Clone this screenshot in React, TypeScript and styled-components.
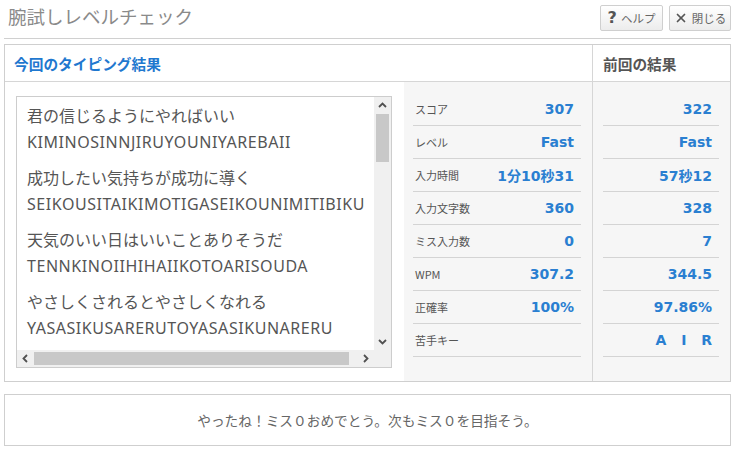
import React from 'react';
import styled, { createGlobalStyle } from 'styled-components';
import { X } from 'lucide-react';

const GlobalStyle = createGlobalStyle`
  body {
    margin: 0;
    background: #fff;
    font-family: 'Noto Sans', 'Noto Sans CJK JP', sans-serif;
    color: #555;
  }
`;

const Page = styled.div`
  padding: 0 7px 0 4px;
`;

const TitleBar = styled.div`
  display: flex;
  justify-content: space-between;
  align-items: flex-start;
  height: 38px;
  border-bottom: 1px solid #d0d0d0;
`;

const Title = styled.h1`
  margin: 0;
  padding: 4px 0 0 4px;
  font-size: 18.5px;
  font-weight: normal;
  color: #8a8a8a;
  line-height: 26px;
`;

const Buttons = styled.div`
  display: flex;
  gap: 6px;
  padding-top: 5px;
`;

const ToolButton = styled.button<{ $w: number }>`
  display: flex;
  align-items: center;
  justify-content: center;
  gap: 4px;
  width: ${(p) => p.$w}px;
  height: 26px;
  padding: 0;
  border: 1px solid #cfcfcf;
  border-radius: 2px;
  background: linear-gradient(#ffffff, #ececec);
  font-family: 'Noto Sans CJK JP', sans-serif;
  font-size: 11.5px;
  color: #666;
`;

const QuestionMark = styled.span`
  font-family: 'DejaVu Sans', sans-serif;
  font-weight: bold;
  font-size: 16px;
  color: #555;
  line-height: 1;
`;

const MainBox = styled.div`
  margin-top: 5px;
  border: 1px solid #cfcfcf;
  display: grid;
  grid-template-columns: 587px 1fr;
  grid-template-rows: 37px auto;
`;

const HeaderCell = styled.div<{ $right?: boolean }>`
  display: flex;
  align-items: center;
  padding-left: ${(p) => (p.$right ? 10 : 9)}px;
  border-bottom: 1px solid #d6d6d6;
  border-left: ${(p) => (p.$right ? '1px solid #d6d6d6' : 'none')};
  font-size: 14.7px;
  font-weight: bold;
  color: ${(p) => (p.$right ? '#555' : '#1f78cf')};
  font-family: 'Noto Sans CJK JP', sans-serif;
`;

const BodyLeft = styled.div`
  display: flex;
`;

const ListArea = styled.div`
  width: 399px;
  padding: 14px 11px 13px 11px;
  box-sizing: border-box;
`;

const ScrollBox = styled.div`
  width: 376px;
  height: 272px;
  box-sizing: border-box;
  border: 1px solid #cdcdcd;
  display: grid;
  grid-template-columns: 1fr 17px;
  grid-template-rows: 1fr 17px;
`;

const ScrollContent = styled.div`
  overflow: hidden;
  padding: 6px 10px;
  white-space: nowrap;
`;

const Sentence = styled.div`
  margin-bottom: 10px;
  font-size: 16px;
  line-height: 26px;
  color: #555;
`;

const Roman = styled.div`
  letter-spacing: 0.55px;
`;

const VBar = styled.div`
  display: flex;
  flex-direction: column;
  background: #f0f0f0;
`;

const HBar = styled.div`
  display: flex;
  background: #f0f0f0;
`;

const Corner = styled.div`
  background: #f0f0f0;
`;

const Arrow = styled.div`
  flex: 0 0 17px;
  height: 17px;
  display: flex;
  align-items: center;
  justify-content: center;
`;

const Track = styled.div<{ $vertical?: boolean }>`
  flex: 1;
  display: flex;
  flex-direction: ${(p) => (p.$vertical ? 'column' : 'row')};
`;

const Thumb = styled.div<{ $vertical?: boolean; $size: number }>`
  background: #c8c8c8;
  ${(p) =>
    p.$vertical
      ? `height: ${p.$size}px; margin: 0 2px;`
      : `width: ${p.$size}px; margin: 2px 0;`}
`;

const StatsArea = styled.div<{ $right?: boolean }>`
  flex: 1;
  background: #f6f6f6;
  padding: ${(p) => (p.$right ? '11px 11px 22px 10px' : '11px 11px 22px 9px')};
  border-left: ${(p) => (p.$right ? '1px solid #d6d6d6' : 'none')};
`;

const StatRow = styled.div`
  display: flex;
  align-items: center;
  justify-content: space-between;
  height: 32px;
  padding: 0 7px 0 2px;
  border-bottom: 1px solid #d4d4d4;
`;

const StatLabel = styled.span`
  font-family: 'Noto Sans CJK JP', sans-serif;
  font-size: 11px;
  color: #555;
`;

const StatValue = styled.span<{ $spaced?: boolean }>`
  font-family: 'DejaVu Sans', 'Noto Sans CJK JP', sans-serif;
  font-weight: bold;
  font-size: 14px;
  color: #2a7fd1;
  margin-left: auto;
  letter-spacing: ${(p) => (p.$spaced ? '5px' : 'normal')};
  margin-right: ${(p) => (p.$spaced ? '-5px' : '0')};
`;

const Footer = styled.div`
  margin-top: 12px;
  height: 50px;
  border: 1px solid #cfcfcf;
  display: flex;
  align-items: center;
  justify-content: center;
  font-family: 'Noto Sans CJK JP', sans-serif;
  font-size: 13.7px;
  color: #666;
`;

const Chevron = ({ dir }: { dir: 'up' | 'down' | 'left' | 'right' }) => {
  const pts = {
    up: '1,6 4.5,2.5 8,6',
    down: '1,3 4.5,6.5 8,3',
    left: '6,1 2.5,4.5 6,8',
    right: '3,1 6.5,4.5 3,8',
  }[dir];
  return (
    <svg width="9" height="9" viewBox="0 0 9 9">
      <polyline points={pts} fill="none" stroke="#505050" strokeWidth="1.8" />
    </svg>
  );
};

const sentences = [
  ['君の信じるようにやればいい', 'KIMINOSINNJIRUYOUNIYAREBAII'],
  ['成功したい気持ちが成功に導く', 'SEIKOUSITAIKIMOTIGASEIKOUNIMITIBIKU'],
  ['天気のいい日はいいことありそうだ', 'TENNKINOIIHIHAIIKOTOARISOUDA'],
  ['やさしくされるとやさしくなれる', 'YASASIKUSARERUTOYASASIKUNARERU'],
];

const current = [
  ['スコア', '307'],
  ['レベル', 'Fast'],
  ['入力時間', '1分10秒31'],
  ['入力文字数', '360'],
  ['ミス入力数', '0'],
  ['WPM', '307.2'],
  ['正確率', '100%'],
  ['苦手キー', ''],
];

const previous = ['322', 'Fast', '57秒12', '328', '7', '344.5', '97.86%', 'A I R'];

export default function App() {
  return (
    <>
      <GlobalStyle />
      <Page>
        <TitleBar>
          <Title>腕試しレベルチェック</Title>
          <Buttons>
            <ToolButton $w={63}>
              <QuestionMark>?</QuestionMark>ヘルプ
            </ToolButton>
            <ToolButton $w={62}>
              <X size={14} strokeWidth={3} color="#555" />閉じる
            </ToolButton>
          </Buttons>
        </TitleBar>

        <MainBox>
          <HeaderCell>今回のタイピング結果</HeaderCell>
          <HeaderCell $right>前回の結果</HeaderCell>

          <BodyLeft>
            <ListArea>
              <ScrollBox>
                <ScrollContent>
                  {sentences.map(([jp, roman]) => (
                    <Sentence key={roman}>
                      {jp}
                      <Roman>{roman}</Roman>
                    </Sentence>
                  ))}
                </ScrollContent>
                <VBar>
                  <Arrow>
                    <Chevron dir="up" />
                  </Arrow>
                  <Track $vertical>
                    <Thumb $vertical $size={48} />
                  </Track>
                  <Arrow>
                    <Chevron dir="down" />
                  </Arrow>
                </VBar>
                <HBar>
                  <Arrow>
                    <Chevron dir="left" />
                  </Arrow>
                  <Track>
                    <Thumb $size={315} />
                  </Track>
                  <Arrow>
                    <Chevron dir="right" />
                  </Arrow>
                </HBar>
                <Corner />
              </ScrollBox>
            </ListArea>
            <StatsArea>
              {current.map(([label, value]) => (
                <StatRow key={label}>
                  <StatLabel>{label}</StatLabel>
                  <StatValue>{value}</StatValue>
                </StatRow>
              ))}
            </StatsArea>
          </BodyLeft>

          <StatsArea $right>
            {previous.map((value, i) => (
              <StatRow key={i}>
                <StatValue $spaced={value === 'A I R'}>{value}</StatValue>
              </StatRow>
            ))}
          </StatsArea>
        </MainBox>

        <Footer>やったね！ミス０おめでとう。次もミス０を目指そう。</Footer>
      </Page>
    </>
  );
}
